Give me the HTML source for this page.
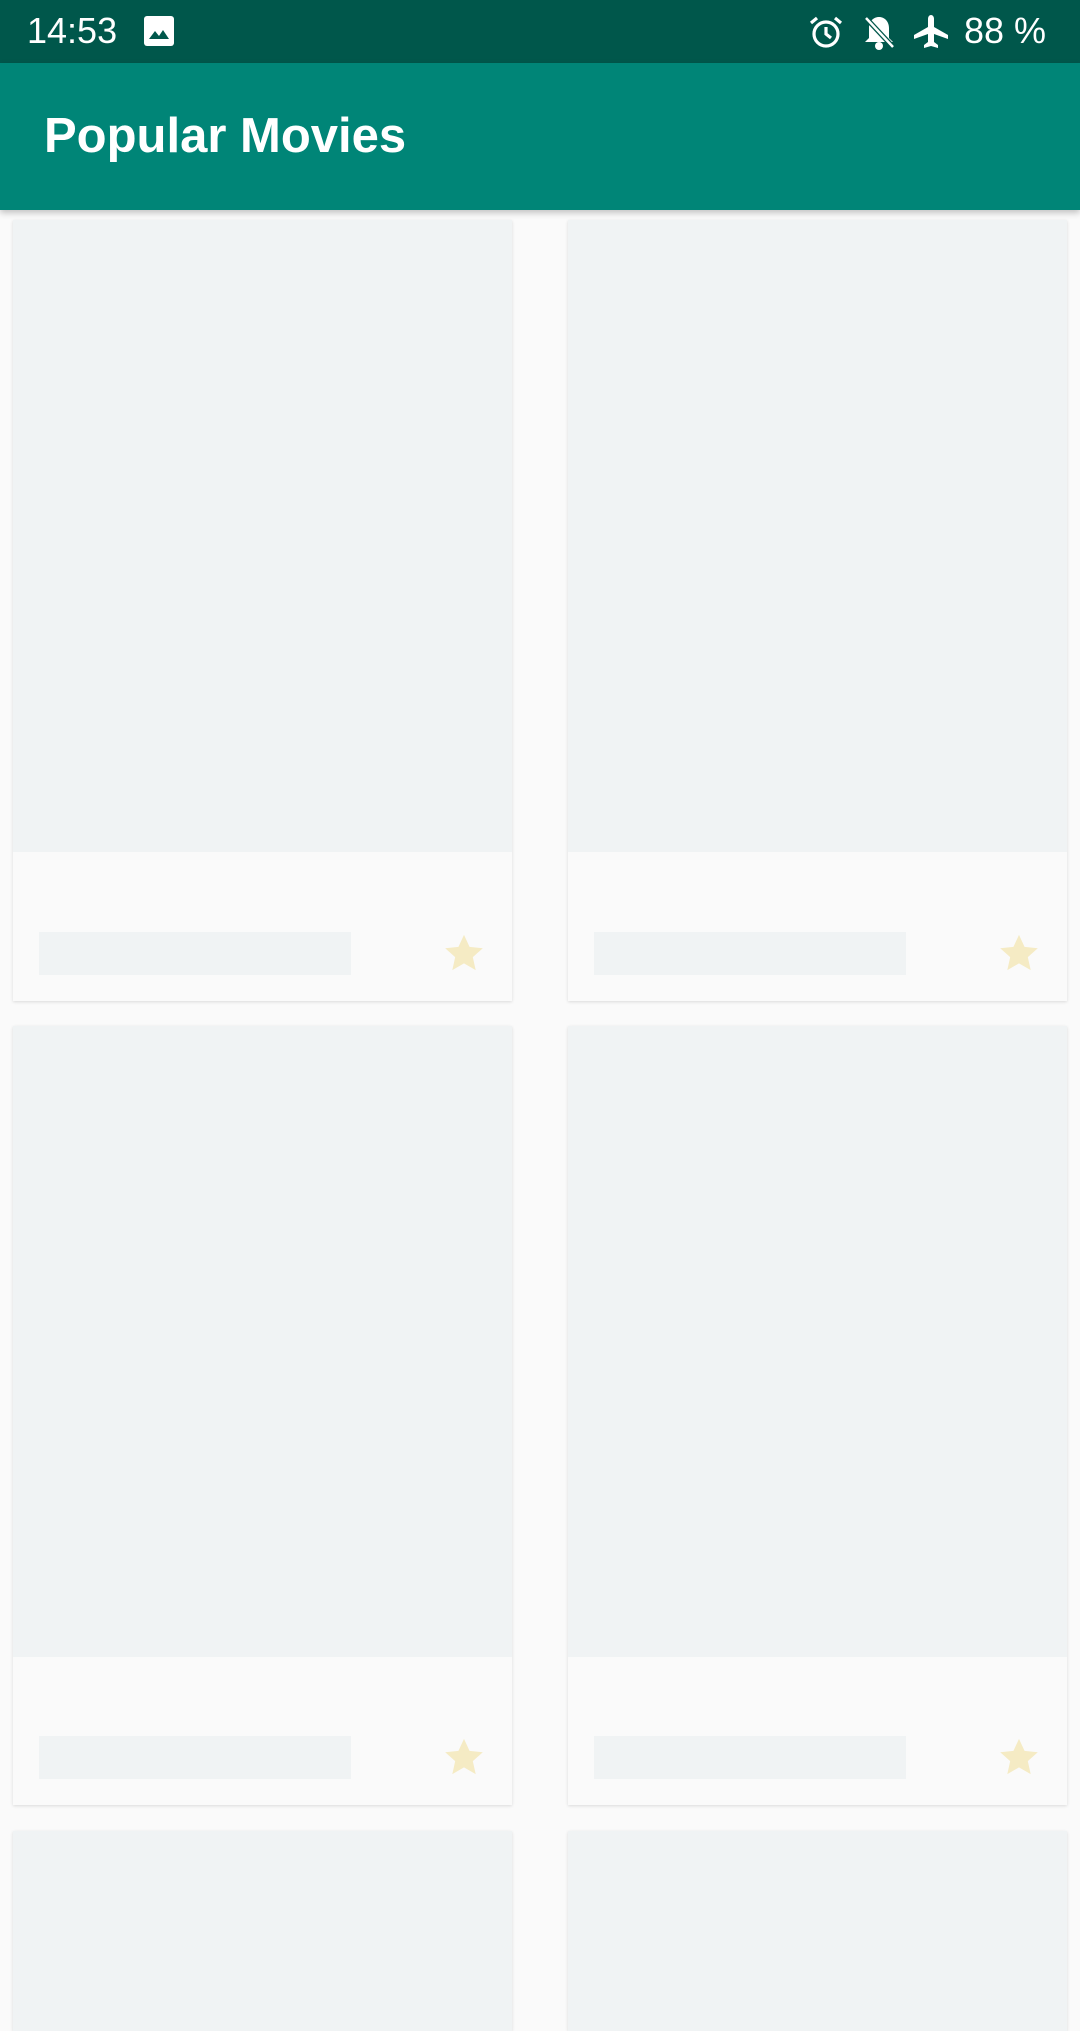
<!DOCTYPE html>
<html><head><meta charset="utf-8"><style>
*{margin:0;padding:0;box-sizing:border-box}
body{width:1080px;height:1920px;overflow:hidden;background:#FAFAFA;font-family:"Liberation Sans",sans-serif;position:relative}
.sb{position:absolute;left:0;top:0;width:1080px;height:63px;background:#00574B;color:#fff}
.ab{position:absolute;left:0;top:63px;width:1080px;height:147px;background:#008577;box-shadow:0 3px 6px rgba(0,0,0,.22);z-index:2}
.ab span{position:absolute;left:44px;top:45px;font-size:49px;font-weight:bold;color:#fff}
.card{position:absolute;width:499px;background:#FAFAFA;box-shadow:0 1px 3px rgba(0,0,0,.13)}
.img{position:absolute;left:0;top:0;width:100%;background:#F0F3F4}
.bar{position:absolute;left:26px;width:312px;height:43px;background:#F0F3F4}
.star{position:absolute;width:46px;height:46px}
</style></head><body>
<div class="sb">
 <div style="position:absolute;left:27px;top:10px;font-size:36px">14:53</div>
 <svg style="position:absolute;left:144px;top:16px" width="30" height="30" viewBox="0 0 30 30"><rect x="0" y="0" width="30" height="30" rx="3" fill="#fff"/><path d="M5 23 L11 15 L15 20 L19 14 L25 23 Z" fill="#00574B"/></svg>
 <svg style="position:absolute;left:808px;top:14px" width="36" height="36" viewBox="0 0 36 36" fill="none" stroke="#fff" stroke-width="3.2"><circle cx="18" cy="20" r="12"/><path d="M18 13v7l5 4"/><path d="M3 9l6-5M33 9l-6-5"/></svg>
 <svg style="position:absolute;left:860px;top:14px" width="38" height="38" viewBox="0 0 38 38"><path d="M19 3c-6 0-10 5-10 11v10l-4 4h28l-4-4V14c0-6-4-11-10-11z" fill="#fff"/><circle cx="19" cy="32" r="4" fill="#fff"/><path d="M5 3l28 30" stroke="#00574B" stroke-width="5"/><path d="M6 4l27 29" stroke="#fff" stroke-width="2.5"/></svg>
 <svg style="position:absolute;left:912px;top:14px" width="38" height="36" viewBox="0 0 38 36"><path d="M19 1c-2 0-3 2-3 4v8L2 21v4l14-5v8l-4 3v3l7-2 7 2v-3l-4-3v-8l14 5v-4L22 13V5c0-2-1-4-3-4z" fill="#fff"/></svg>
 <div style="position:absolute;left:964px;top:10px;font-size:36px">88 %</div>
</div>
<div class="ab"><span>Popular Movies</span></div>

<div class="card" style="left:13px;top:220px;height:781px"><div class="img" style="height:632px"></div><div class="bar" style="top:712px"></div>
<svg class="star" style="left:428px;top:711px" viewBox="0 0 24 24"><path d="M12 2l2.9 6.3 6.9.7-5.2 4.6 1.5 6.8L12 16.9 5.9 20.4l1.5-6.8L2.2 9l6.9-.7z" fill="#F5EBC4"/></svg></div>
<div class="card" style="left:568px;top:220px;height:781px"><div class="img" style="height:632px"></div><div class="bar" style="top:712px"></div>
<svg class="star" style="left:428px;top:711px" viewBox="0 0 24 24"><path d="M12 2l2.9 6.3 6.9.7-5.2 4.6 1.5 6.8L12 16.9 5.9 20.4l1.5-6.8L2.2 9l6.9-.7z" fill="#F5EBC4"/></svg></div>

<div class="card" style="left:13px;top:1026px;height:779px"><div class="img" style="height:631px"></div><div class="bar" style="top:710px"></div>
<svg class="star" style="left:428px;top:709px" viewBox="0 0 24 24"><path d="M12 2l2.9 6.3 6.9.7-5.2 4.6 1.5 6.8L12 16.9 5.9 20.4l1.5-6.8L2.2 9l6.9-.7z" fill="#F5EBC4"/></svg></div>
<div class="card" style="left:568px;top:1026px;height:779px"><div class="img" style="height:631px"></div><div class="bar" style="top:710px"></div>
<svg class="star" style="left:428px;top:709px" viewBox="0 0 24 24"><path d="M12 2l2.9 6.3 6.9.7-5.2 4.6 1.5 6.8L12 16.9 5.9 20.4l1.5-6.8L2.2 9l6.9-.7z" fill="#F5EBC4"/></svg></div>

<div class="card" style="left:13px;top:1831px;height:200px"><div class="img" style="height:200px"></div></div>
<div class="card" style="left:568px;top:1831px;height:200px"><div class="img" style="height:200px"></div></div>
</body></html>
